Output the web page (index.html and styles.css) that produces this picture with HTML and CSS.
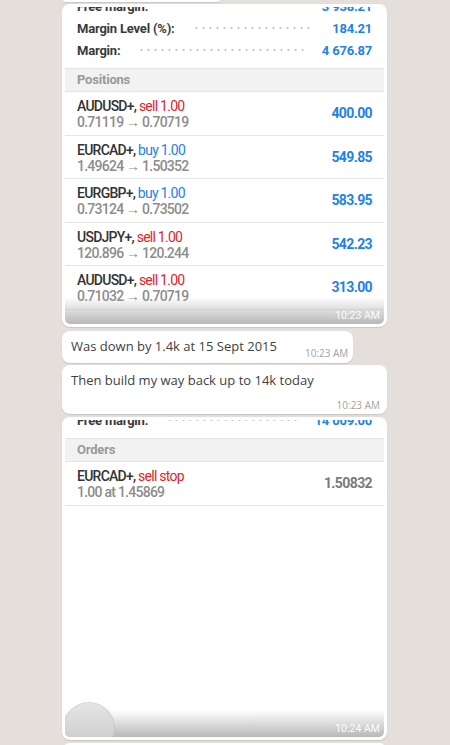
FILE: index.html
```html
<!DOCTYPE html>
<html>
  <head>
    <title>Chat</title>
    <link rel="stylesheet" href="styles.css">
  </head>
  <body>
    <div class="chat">
      <div class="bubble stub"></div>

      <!-- Screenshot: positions -->
      <div class="bubble media">
        <div class="shot">
          <div class="sheet">
            <div class="summary">
              <div class="line"><span class="label">Free margin:</span><span class="dots"></span><span class="amount">3 938.21</span></div>
              <div class="line"><span class="label">Margin Level (%):</span><span class="dots"></span><span class="amount">184.21</span></div>
              <div class="line"><span class="label">Margin:</span><span class="dots"></span><span class="amount">4 676.87</span></div>
            </div>
            <div class="section">Positions</div>
            <div class="trade">
              <div class="info">
                <div class="pair">AUDUSD+, <span class="sell">sell 1.00</span></div>
                <div class="prices">0.71119 → 0.70719</div>
              </div>
              <div class="profit">400.00</div>
            </div>
            <div class="trade">
              <div class="info">
                <div class="pair">EURCAD+, <span class="buy">buy 1.00</span></div>
                <div class="prices">1.49624 → 1.50352</div>
              </div>
              <div class="profit">549.85</div>
            </div>
            <div class="trade">
              <div class="info">
                <div class="pair">EURGBP+, <span class="buy">buy 1.00</span></div>
                <div class="prices">0.73124 → 0.73502</div>
              </div>
              <div class="profit">583.95</div>
            </div>
            <div class="trade">
              <div class="info">
                <div class="pair">USDJPY+, <span class="sell">sell 1.00</span></div>
                <div class="prices">120.896 → 120.244</div>
              </div>
              <div class="profit">542.23</div>
            </div>
            <div class="trade">
              <div class="info">
                <div class="pair">AUDUSD+, <span class="sell">sell 1.00</span></div>
                <div class="prices">0.71032 → 0.70719</div>
              </div>
              <div class="profit">313.00</div>
            </div>
          </div>
          <div class="shade"><span class="stamp">10:23 AM</span></div>
        </div>
      </div>

      <div class="bubble text">
        <div class="msg">Was down by 1.4k at 15 Sept 2015</div>
        <div class="time">10:23 AM</div>
      </div>

      <div class="bubble text wide">
        <div class="msg">Then build my way back up to 14k today</div>
        <div class="time">10:23 AM</div>
      </div>

      <!-- Screenshot: orders -->
      <div class="bubble media">
        <div class="shot">
          <div class="sheet second">
            <div class="summary">
              <div class="line"><span class="label">Free margin:</span><span class="dots"></span><span class="amount">14 009.00</span></div>
            </div>
            <div class="section">Orders</div>
            <div class="trade">
              <div class="info">
                <div class="pair">EURCAD+, <span class="sell">sell stop</span></div>
                <div class="prices">1.00 at 1.45869</div>
              </div>
              <div class="profit muted">1.50832</div>
            </div>
          </div>
          <div class="shade"><span class="nav-button"></span><span class="stamp">10:24 AM</span></div>
        </div>
      </div>

      <div class="bubble next"></div>
    </div>
  </body>
</html>
```

FILE: styles.css
```css
/* Reset */
body {
  margin: 0;
  height: 745px;
  overflow: hidden;
  background-color: #e4dfda;
  font-family: "Open Sans", Arial, sans-serif;
}

/* Chat column */
.chat {
  width: 325px;
  margin-left: 62px;
  display: flex;
  flex-direction: column;
}

.bubble {
  background-color: #ffffff;
  border-radius: 8px;
  box-shadow: 0 1px 1px rgba(0, 0, 0, 0.12);
}

.stub {
  width: 157px;
  height: 2px;
  margin-left: 1px;
  border-radius: 0 0 8px 8px;
}

.next {
  height: 20px;
  margin-top: 3px;
}

/* Image bubbles */
.media {
  padding: 3px;
  margin-top: 2px;
}

.media + .text {
  margin-top: 4px;
}

.text + .media {
  margin-top: 3px;
}

.shot {
  position: relative;
  height: 317px;
  overflow: hidden;
  border-radius: 5px;
  background-color: #ffffff;
  font-family: Roboto, "Liberation Sans", sans-serif;
}

.sheet {
  margin-top: -12px;
}

.sheet.second {
  margin-top: -11px;
}

.summary {
  padding: 0 12px 7px;
}

.line {
  display: flex;
  align-items: center;
  height: 22px;
  font-size: 13px;
  font-weight: 700;
  letter-spacing: -0.2px;
}

.label {
  color: #3a3a3a;
}

.dots {
  flex: 1;
  height: 4px;
  margin: 0 18px;
  background-image: radial-gradient(circle, #c6c6c6 0.9px, transparent 1.3px);
  background-size: 7px 4px;
  background-repeat: repeat-x;
}

.amount {
  color: #1f82e8;
}

.section {
  height: 22px;
  line-height: 22px;
  padding: 0 12px;
  background-color: #f2f2f2;
  border-top: 1px solid #e4e4e4;
  border-bottom: 1px solid #e4e4e4;
  color: #9a9a9a;
  font-size: 13px;
  font-weight: 700;
  letter-spacing: -0.2px;
}

.trade {
  display: flex;
  align-items: center;
  justify-content: space-between;
  height: 42.5px;
  padding: 0 12px;
  border-bottom: 1px solid #e6e6e6;
  box-sizing: content-box;
  font-size: 14px;
  font-weight: 500;
  letter-spacing: -0.75px;
}

.info {
  line-height: 16px;
  padding-top: 2px;
}

.pair {
  color: #333333;
}

.prices {
  color: #8c8c8c;
}

.sell {
  color: #e0242b;
  font-weight: 400;
}

.buy {
  color: #1f82e8;
  font-weight: 400;
}

.profit {
  color: #1f82e8;
  font-weight: 700;
  letter-spacing: -0.6px;
}

.profit.muted {
  color: #7a7a7a;
}

/* Bottom fade with timestamp */
.shade {
  position: absolute;
  left: 0;
  right: 0;
  bottom: 0;
  height: 27px;
  background: linear-gradient(rgba(205, 205, 205, 0), #b8b8b8);
  text-align: right;
}

.stamp {
  position: absolute;
  right: 4px;
  bottom: 1px;
  color: rgba(255, 255, 255, 0.95);
  font-size: 10.5px;
  line-height: 14px;
}

.nav-button {
  position: absolute;
  left: -2px;
  top: -8px;
  width: 52px;
  height: 52px;
  border-radius: 50%;
  background: linear-gradient(#e6e6e6, #c4c4c4);
  box-shadow: inset 0 0 0 1px rgba(0, 0, 0, 0.06);
}

/* Text bubbles */
.text {
  display: flex;
  align-items: flex-end;
  align-self: flex-start;
  padding: 0 5px 0 9px;
  color: #3f3f3f;
  font-size: 13px;
}

.text + .text {
  margin-top: 2px;
}

.msg {
  padding: 6px 0 8px;
  line-height: 18px;
}

.time {
  margin: 0 0 3px 28px;
  color: #a3a3a3;
  font-size: 10px;
  line-height: 14px;
}

.text.wide {
  display: block;
  align-self: stretch;
  padding-bottom: 2px;
}

.wide .msg {
  padding-bottom: 0;
}

.wide .time {
  margin: 9px 2px 0 0;
  text-align: right;
}
```
